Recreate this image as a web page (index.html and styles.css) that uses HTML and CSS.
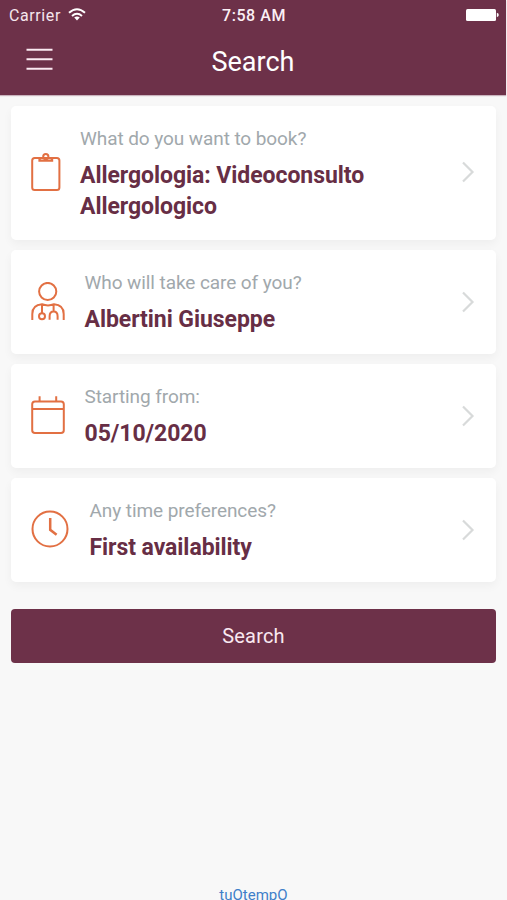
FILE: index.html
```html
<!DOCTYPE html>
<html lang="en">
<head>
<meta charset="utf-8">
<title>Search</title>
<link rel="stylesheet" href="styles.css">
</head>
<body>
<div class="app">
  <header class="header">
    <div class="status">
      <div class="carrier"><span>Carrier</span>
        <svg width="18" height="13" viewBox="0 0 18 13" fill="none" stroke="#fff" stroke-width="2"><path d="M1 4.8Q9-2.2 17 4.8M4 7.9Q9 3.7 14 7.9"/><path d="M9 12.4L6.2 9.6Q9 7.4 11.8 9.6Z" fill="#fff" stroke="none"/></svg>
      </div>
      <time class="clock">7:58 AM</time>
      <svg class="battery" width="34" height="14" viewBox="0 0 34 14" fill="#fff"><rect x="1" y="1" width="30" height="12" rx="1.5"/><path d="M31.8 4.8q2 .6 2 2.2t-2 2.2z"/></svg>
    </div>
    <nav class="bar">
      <svg class="menu" width="27" height="24" viewBox="0 0 27 24" stroke="#fbeaf2" stroke-width="2"><path d="M.5 2.8h26M.5 12.3h26M.5 21.7h26"/></svg>
      <h1>Search</h1>
    </nav>
  </header>
  <main class="content">
    <section class="card tall">
      <svg class="icon" width="30" height="40" viewBox="0 0 30 40"><rect x="1.2" y="5" width="27.2" height="32" rx="2.5"/><circle cx="14.8" cy="3.6" r="2.6"/><path d="M8.6 5v2.6h12.4V5" stroke-width="2.4"/></svg>
      <div class="text"><p class="label">What do you want to book?</p><p class="value">Allergologia: Videoconsulto<br>Allergologico</p></div>
      <svg class="chevron" width="14" height="22" viewBox="0 0 14 22"><path d="M2 1.5l9.5 9.5L2 20.5"/></svg>
    </section>
    <section class="card">
      <svg class="icon" width="35" height="40" viewBox="0 0 35 40"><circle cx="16.7" cy="9.5" r="8.6"/><path d="M1.3 38v-6q0-9 9.7-9.7 6 2.2 12 0 9.7.7 9.7 9.7v6M11 22.5v8.5M22.6 22.5V29M18.6 37.8v-3.6q0-4.6 4-4.6t4 4.6v3.6"/><circle cx="11" cy="34.2" r="3"/></svg>
      <div class="text"><p class="label">Who will take care of you?</p><p class="value">Albertini Giuseppe</p></div>
      <svg class="chevron" width="14" height="22" viewBox="0 0 14 22"><path d="M2 1.5l9.5 9.5L2 20.5"/></svg>
    </section>
    <section class="card">
      <svg class="icon" width="35" height="40" viewBox="0 0 35 40"><rect x="1.2" y="5.4" width="31.6" height="31.6" rx="2.8"/><path d="M1.2 13H33M8.6.3v5M25.2.3v5"/></svg>
      <div class="text"><p class="label">Starting from:</p><p class="value">05/10/2020</p></div>
      <svg class="chevron" width="14" height="22" viewBox="0 0 14 22"><path d="M2 1.5l9.5 9.5L2 20.5"/></svg>
    </section>
    <section class="card">
      <svg class="icon" width="40" height="40" viewBox="0 0 40 40"><circle cx="19" cy="19" r="17.5"/><path stroke-width="2.5" d="M19.2 8v11.8l6.4 5"/></svg>
      <div class="text"><p class="label">Any time preferences?</p><p class="value">First availability</p></div>
      <svg class="chevron" width="14" height="22" viewBox="0 0 14 22"><path d="M2 1.5l9.5 9.5L2 20.5"/></svg>
    </section>
    <button class="submit" type="button">Search</button>
  </main>
  <footer class="footer">tuOtempO</footer>
</div>
</body>
</html>
```
FILE: styles.css
```css
* { box-sizing: border-box; }
body { margin: 0; background: #f8f8f8; font-family: Roboto, "Liberation Sans", sans-serif; }
p, h1 { margin: 0; }
svg { display: block; flex: none; }
.app { height: 900px; display: flex; flex-direction: column; overflow: hidden; }
.header { height: 95px; flex: none; background: #6d3149; color: #fff; margin-right: 1px; box-shadow: 0 1px 1px #c9b3bd; }
.status { height: 30px; padding: 0 7px 0 9px; display: grid; grid-template-columns: 1fr auto 1fr; align-items: center; font-size: 16px; }
.carrier { display: flex; align-items: center; gap: 7px; color: #f5e6ed; letter-spacing: .6px; }
.carrier svg { margin-top: -2px; }
.clock { font-weight: 500; letter-spacing: .55px; color: #fbf0f5; }
.battery { justify-self: end; }
.bar { height: 65px; padding: 0 26px; display: grid; grid-template-columns: 1fr auto 1fr; align-items: start; }
.menu { margin-top: 17px; }
.bar h1 { font-size: 27px; font-weight: 400; line-height: 32px; margin-top: 16px; }
.content { padding: 11px 11px 0; display: flex; flex-direction: column; gap: 10px; }
.card { width: 485px; height: 104px; padding: 0 21px 0 20px; border-radius: 5px; background: #fff; box-shadow: 0 4px 10px rgba(0,0,0,.045); display: flex; align-items: center; }
.card.tall { height: 134px; }
.icon { margin-right: 18.5px; fill: none; stroke: #e27043; stroke-width: 2; }
.tall .icon { margin-right: 19px; }
.text { flex: 1; margin-top: 1px; white-space: nowrap; }
.tall .text { margin-top: 2px; }
.label { font-size: 19px; line-height: 26px; letter-spacing: -.08px; color: #a1a8ac; }
.value { font-size: 23px; line-height: 31px; margin-top: 8px; letter-spacing: -.06px; font-weight: 700; color: #672e45; }
.tall .value { margin-top: 7.5px; }
.chevron { margin-top: -1px; fill: none; stroke: #d8dada; stroke-width: 2.2; }
.tall .chevron { margin-top: -2px; }
.submit { width: 485px; height: 54px; margin-top: 17px; padding: 0; border: 0; border-radius: 4px; background: #6d3149; color: #f9e8f0; font: 400 20px Roboto, sans-serif; letter-spacing: .2px; }
.footer { margin-top: auto; height: 14px; text-align: center; font-size: 15px; line-height: 18px; color: #3f7fc9; }
```
